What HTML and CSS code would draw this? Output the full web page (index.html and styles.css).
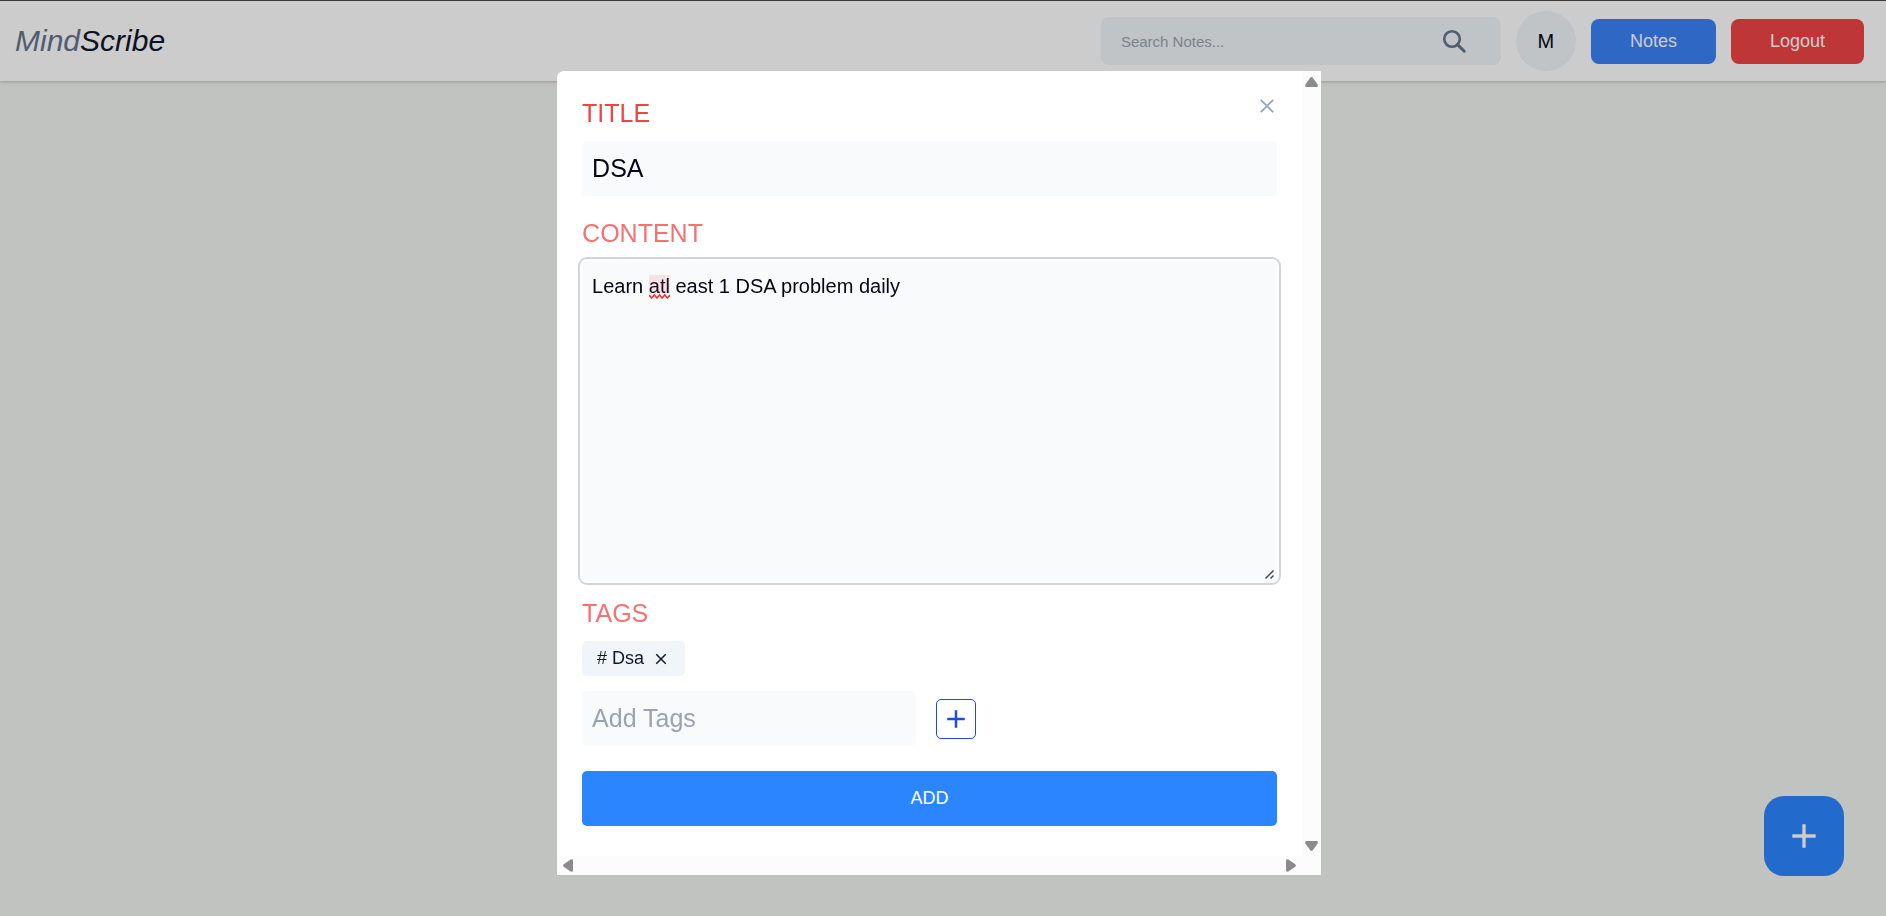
FILE: index.html
```html
<!DOCTYPE html>
<html lang="en">
<head>
<meta charset="utf-8">
<title>MindScribe</title>
<link rel="stylesheet" href="styles.css">
</head>
<body>
<header class="navbar">
  <h1 class="brand"><span class="brand-soft">Mind</span>Scribe</h1>
  <form class="search" role="search">
    <input class="search-input" type="text" placeholder="Search Notes..." aria-label="Search notes">
    <button class="icon-button search-button" type="button" aria-label="Search">
      <svg width="25" height="25" viewBox="0 0 25 25" fill="none" stroke="currentColor"><circle cx="10" cy="10" r="7.8" stroke-width="2.6"/><path d="M15.6 15.6 22.2 22.2" stroke-width="3" stroke-linecap="round"/></svg>
    </button>
  </form>
  <div class="avatar">M</div>
  <button class="nav-button notes" type="button">Notes</button>
  <button class="nav-button logout" type="button">Logout</button>
</header>

<button class="fab" type="button" aria-label="New note">
  <svg width="40" height="40" viewBox="0 0 24 24" fill="currentColor"><path d="M19 13h-6v6h-2v-6H5v-2h6V5h2v6h6v2z"/></svg>
</button>

<div class="overlay">
  <section class="modal" role="dialog" aria-modal="true" aria-label="Add note">
    <form class="note-form">
      <button class="icon-button close" type="button" aria-label="Close">
        <svg width="24" height="24" viewBox="0 0 24 24" fill="none" stroke="currentColor" stroke-width="1.7"><path d="M5.8 5.8 18.2 18.2M18.2 5.8 5.8 18.2"/></svg>
      </button>
      <div class="field">
        <label class="label label-strong" for="title">TITLE</label>
        <input class="text-input" id="title" type="text" value="DSA">
      </div>
      <div class="field content-field">
        <label class="label" for="content">CONTENT</label>
        <div class="editor">
          <textarea class="content-input" id="content" spellcheck="false">Learn atl east 1 DSA problem daily</textarea>
          <svg class="spelling" width="21" height="24" viewBox="0 0 21 24" aria-hidden="true"><path d="M0 0h21v19H0z" fill="#ef4444" fill-opacity=".12"/><path d="M0 20l2.6 3 2.7-3 2.6 3 2.6-3 2.6 3 2.7-3 2.6 3 2.6-3" fill="none" stroke="#f03030" stroke-width="1.5"/></svg>
          <svg class="grip" width="13" height="13" viewBox="0 0 13 13" aria-hidden="true"><path d="M1.5 10.5 9.5 2.5M6.5 10.5 9.5 7.5" stroke="#4a4a4a" stroke-width="1.5"/></svg>
        </div>
      </div>
      <div class="field tags-field">
        <label class="label" for="tag">TAGS</label>
        <div class="tag-list">
          <span class="tag"># Dsa
            <button class="icon-button" type="button" aria-label="Remove tag Dsa">
              <svg width="18" height="18" viewBox="0 0 24 24" fill="currentColor"><path d="M19 6.41 17.59 5 12 10.59 6.41 5 5 6.41 10.59 12 5 17.59 6.41 19 12 13.41 17.59 19 19 17.59 13.41 12z"/></svg>
            </button>
          </span>
        </div>
      </div>
      <div class="tag-entry">
        <input class="text-input tag-input" id="tag" type="text" placeholder="Add Tags">
        <button class="add-tag" type="button" aria-label="Add tag">
          <svg width="30" height="30" viewBox="0 0 24 24" fill="currentColor"><path d="M19 13h-6v6h-2v-6H5v-2h6V5h2v6h6v2z"/></svg>
        </button>
      </div>
      <button class="submit" type="button">ADD</button>
    </form>
    <div class="scrollbar vertical" aria-hidden="true">
      <svg width="13" height="10" viewBox="0 0 13 10"><path d="M5.2.8Q6.5-.6 7.8.8L12.6 7.6Q13.2 10 11.5 10H1.5Q-.2 10 .4 7.6Z" fill="#8b8b8b"/></svg>
      <svg width="13" height="10" viewBox="0 0 13 10"><path d="M5.2 9.2Q6.5 10.6 7.8 9.2L12.6 2.4Q13.2 0 11.5 0H1.5Q-.2 0 .4 2.4Z" fill="#8b8b8b"/></svg>
    </div>
    <div class="scrollbar horizontal" aria-hidden="true">
      <svg width="10" height="13" viewBox="0 0 10 13"><path d="M.8 5.2Q-.6 6.5.8 7.8L7.6 12.6Q10 13.2 10 11.5V1.5Q10-.2 7.6.4Z" fill="#8b8b8b"/></svg>
      <svg width="10" height="13" viewBox="0 0 10 13"><path d="M9.2 5.2Q10.6 6.5 9.2 7.8L2.4 12.6Q0 13.2 0 11.5V1.5Q0-.2 2.4.4Z" fill="#8b8b8b"/></svg>
    </div>
    <div class="scrollbar"></div>
  </section>
</div>
<div class="window-edge"></div>
</body>
</html>
```
FILE: styles.css
```css
* {
  box-sizing: border-box;
}

body {
  margin: 0;
  min-height: 100vh;
  background: #f2f4f0;
  color: #020617;
  font-family: "Liberation Sans", Arial, sans-serif;
  font-size: 18px;
}

button,
input,
textarea {
  margin: 0;
  border: 0;
  outline: 0;
  font: inherit;
  color: inherit;
}

button {
  padding: 0;
  cursor: pointer;
}

svg {
  display: block;
}

::placeholder {
  color: #9ca3af;
  opacity: 1;
}

.icon-button {
  background: none;
}

.navbar {
  display: flex;
  align-items: center;
  gap: 15px;
  padding: 11px 22px 10px 15px;
  background: #fff;
  box-shadow: 0 1px 2px rgba(0, 0, 0, 0.15), 0 2px 5px rgba(0, 0, 0, 0.06);
}

.brand {
  margin: 0 auto 0 0;
  font-size: 30px;
  font-style: italic;
  font-weight: 400;
  line-height: 40px;
  color: #0f172a;
}

.brand-soft {
  color: #64748b;
}

.search {
  display: flex;
  align-items: center;
  width: 400px;
  height: 48px;
  padding: 0 34px 0 20px;
  border-radius: 8px;
  background: #f1f5f9;
}

.search-input {
  flex: 1;
  min-width: 0;
  padding: 12px 0;
  background: transparent;
  font-size: 15px;
}

.search-button {
  color: #64748b;
}

.avatar {
  display: grid;
  place-items: center;
  width: 60px;
  height: 60px;
  border-radius: 50%;
  background: #f1f5f9;
  font-size: 20px;
}

.nav-button {
  height: 45px;
  padding: 0 39px;
  border-radius: 8px;
  color: #fff;
}

.notes {
  background: #3b82f6;
}

.logout {
  background: #ef4444;
}

.fab {
  position: fixed;
  right: 42px;
  bottom: 40px;
  display: grid;
  place-items: center;
  width: 80px;
  height: 80px;
  border-radius: 20px;
  background: #2b85ff;
  color: #fff;
}

.overlay {
  position: fixed;
  inset: 0;
  display: flex;
  justify-content: center;
  align-items: flex-start;
  padding: 71px 8px 0 0;
  background: rgba(0, 0, 0, 0.2);
}

.modal {
  display: grid;
  grid-template-columns: minmax(0, 1fr) 19px;
  grid-template-rows: auto 19px;
  width: 40.5vw;
  border-radius: 7px 0 0 0;
  background: #fff;
}

.note-form {
  position: relative;
  display: flex;
  flex-direction: column;
  padding: 25px 25px 30px;
}

.close {
  position: absolute;
  top: 23px;
  right: 23px;
  color: #94a3b8;
}

.field {
  display: flex;
  flex-direction: column;
  gap: 10px;
}

.label {
  font-size: 25px;
  line-height: 35px;
  color: #f87171;
}

.label-strong {
  color: #ef4444;
}

.text-input {
  height: 55px;
  padding: 10px;
  border-radius: 5px;
  background: #f8fafc;
  font-size: 25px;
}

.content-field {
  margin-top: 20px;
}

.editor {
  position: relative;
  display: flex;
}

.content-input {
  flex: 1;
  min-width: 0;
  height: 320px;
  padding: 10px;
  border-radius: 5px;
  outline: 2px solid #d1d5db;
  outline-offset: 2px;
  background: #f8fafc;
  font-size: 20px;
  line-height: 30px;
}

.content-input::-webkit-resizer {
  background: transparent;
}

.spelling {
  position: absolute;
  top: 14px;
  left: 67px;
  pointer-events: none;
}

.grip {
  position: absolute;
  right: 0;
  bottom: 0;
  pointer-events: none;
}

.tags-field {
  margin-top: 15px;
}

.tag-list {
  display: flex;
}

.tag {
  display: flex;
  align-items: center;
  gap: 8px;
  height: 35px;
  padding: 0 15px;
  border-radius: 5px;
  background: #f1f5f9;
  color: #0f172a;
}

.tag-entry {
  display: flex;
  align-items: center;
  gap: 20px;
  margin-top: 15px;
}

.tag-input {
  width: 334px;
}

.add-tag {
  display: grid;
  place-items: center;
  width: 40px;
  height: 40px;
  border: 1px solid #1d4ed8;
  border-radius: 5px;
  background: #fff;
  color: #1d4ed8;
}

.submit {
  height: 55px;
  margin-top: 25px;
  border-radius: 5px;
  background: #2b85ff;
  color: #fff;
}

.scrollbar {
  display: flex;
  justify-content: space-between;
  align-items: center;
  background: #fcfcfc;
}

.vertical {
  flex-direction: column;
  padding: 6px 0 5px;
}

.horizontal {
  padding: 0 6px;
}

.window-edge {
  position: fixed;
  inset: 0 0 auto;
  height: 1px;
  background: #3c3a3b;
}
```
